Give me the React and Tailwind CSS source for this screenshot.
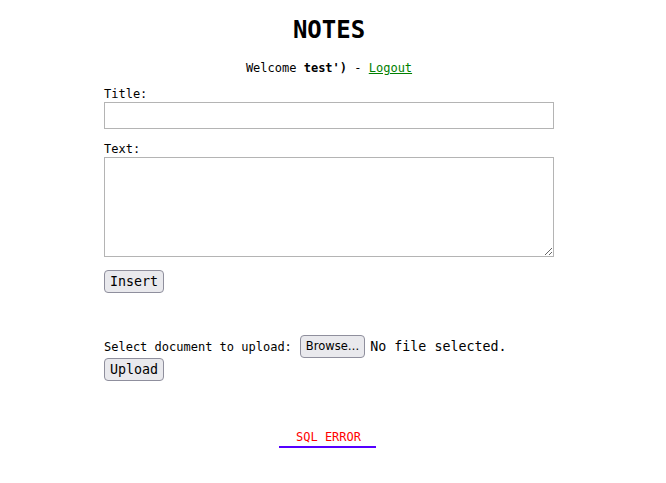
import React from 'react';

export default function App() {
    return (
        <div className="min-h-[483px] bg-white text-black font-['DejaVu_Sans_Mono',monospace] text-[12px] pr-[8px]">
            <div className="w-[450px] mx-auto pt-[15px]">
                <h1 className="text-center text-[24px] font-bold leading-[30px]">NOTES</h1>
                <p className="text-center mt-[16px] leading-[15px]">
                    Welcome <b>test')</b> - <a href="#" className="text-[#008000] underline">Logout</a>
                </p>
                <div className="mt-[11px] leading-[15px]">Title:</div>
                <input type="text" className="block w-[450px] h-[27px] border border-[#b4b4b4] bg-white outline-none" />
                <div className="mt-[13px] leading-[15px]">Text:</div>
                <textarea className="block w-[450px] h-[100px] border border-[#b4b4b4] bg-white outline-none"></textarea>
                <button className="mt-[13px] h-[23px] px-[5px] text-[13.33px] leading-[15px] bg-[#e9e9ed] border border-[#8f8f9d] rounded-[4px]">Insert</button>
                <div className="mt-[42px] flex items-center h-[23px]">
                    <span>Select document to upload:</span>
                    <span className="ml-[8px] h-[23px] px-[5px] flex items-center text-[11.5px] font-['DejaVu_Sans',sans-serif] bg-[#e9e9ed] border border-[#8f8f9d] rounded-[4px]">Browse…</span>
                    <span className="ml-[5px] text-[13.33px]">No file selected.</span>
                </div>
                <button className="h-[23px] px-[5px] text-[13.33px] leading-[15px] bg-[#e9e9ed] border border-[#8f8f9d] rounded-[4px]">Upload</button>
                <div className="flex justify-center mt-[49px] pr-[4px]">
                    <span className="w-[97px] pl-[3px] text-center text-[#ff0000] border-b-[2px] border-[#5500ff] leading-[15px] pb-[1px]">SQL ERROR</span>
                </div>
            </div>
        </div>
    );
}
